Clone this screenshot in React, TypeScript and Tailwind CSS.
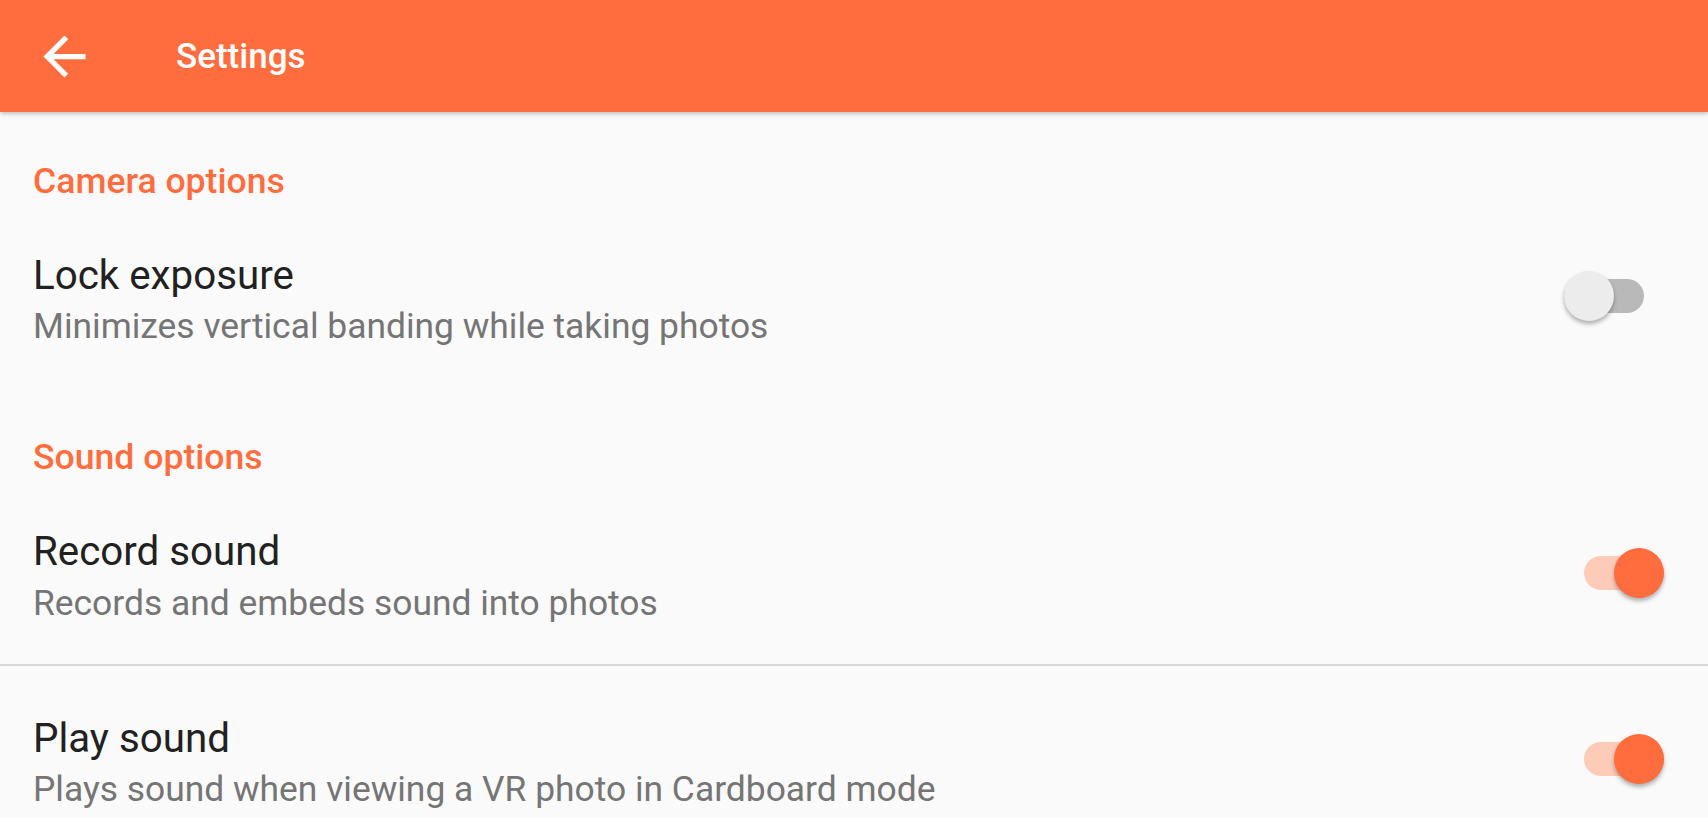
import React from "react";

const ORANGE = "#ff6c3d";

function Toggle({ on }: { on: boolean }) {
    return (
        <div className="relative w-[80px] h-[50px] shrink-0">
            <div
                className={`absolute left-0 right-0 top-[8px] h-[34px] rounded-full ${
                    on ? "bg-[#ffcbb9]" : "bg-[#b9b9b9]"
                }`}
            />
            <div
                className={`absolute top-0 w-[50px] h-[50px] rounded-full shadow-[0_3px_4px_rgba(0,0,0,0.3)] ${
                    on ? "left-[30px] bg-[#ff6c3d]" : "left-0 bg-[#ececec]"
                }`}
            />
        </div>
    );
}

interface PrefProps {
    title: string;
    summary: string;
    on: boolean;
    switchRight: string;
    mt: string;
    summaryMt: string;
}

function Pref({ title, summary, on, switchRight, mt, summaryMt }: PrefProps) {
    return (
        <div className={`flex items-center ${mt}`}>
            <div className="flex-1 flex flex-col">
                <p className="text-[40.3px] leading-[47px] text-[#212121]">{title}</p>
                <p className={`text-[35.4px] leading-[41px] text-[#757575] ${summaryMt}`}>
                    {summary}
                </p>
            </div>
            <div className={`mb-[6px] ${switchRight}`}>
                <Toggle on={on} />
            </div>
        </div>
    );
}

export default function App() {
    return (
        <div
            className="w-[1708px] h-[818px] overflow-hidden bg-[#fafafa]"
            style={{ fontFamily: "Roboto, 'Noto Sans', sans-serif" }}
        >
            <header className="relative z-10 h-[112px] flex items-center bg-[#ff6c3d] shadow-[0_2px_4px_rgba(0,0,0,0.22)]">
                <svg
                    width="63"
                    height="63"
                    viewBox="0 0 24 24"
                    className="ml-[33px] fill-white"
                >
                    <path d="M20 11H7.83l5.59-5.59L12 4l-8 8 8 8 1.41-1.41L7.83 13H20v-2z" />
                </svg>
                <h1 className="ml-[80px] text-[35px] leading-[41px] font-medium text-white">
                    Settings
                </h1>
            </header>

            <div className="pl-[33px]">
                <h2
                    className="pt-[49px] text-[35.6px] leading-[41px] font-medium"
                    style={{ color: ORANGE }}
                >
                    Camera options
                </h2>
                <Pref
                    title="Lock exposure"
                    summary="Minimizes vertical banding while taking photos"
                    on={false}
                    switchRight="mr-[64px]"
                    mt="mt-[50px]"
                    summaryMt="mt-[6.5px]"
                />
                <h2
                    className="mt-[90px] text-[35.6px] leading-[41px] font-medium"
                    style={{ color: ORANGE }}
                >
                    Sound options
                </h2>
                <Pref
                    title="Record sound"
                    summary="Records and embeds sound into photos"
                    on={true}
                    switchRight="mr-[44px]"
                    mt="mt-[50px]"
                    summaryMt="mt-[8.5px]"
                />
            </div>
            <div className="mt-[40px] h-[2px] bg-[#d9d9d9]" />
            <div className="pl-[33px]">
                <Pref
                    title="Play sound"
                    summary="Plays sound when viewing a VR photo in Cardboard mode"
                    on={true}
                    switchRight="mr-[44px]"
                    mt="mt-[49px]"
                    summaryMt="mt-[6.5px]"
                />
            </div>
        </div>
    );
}
